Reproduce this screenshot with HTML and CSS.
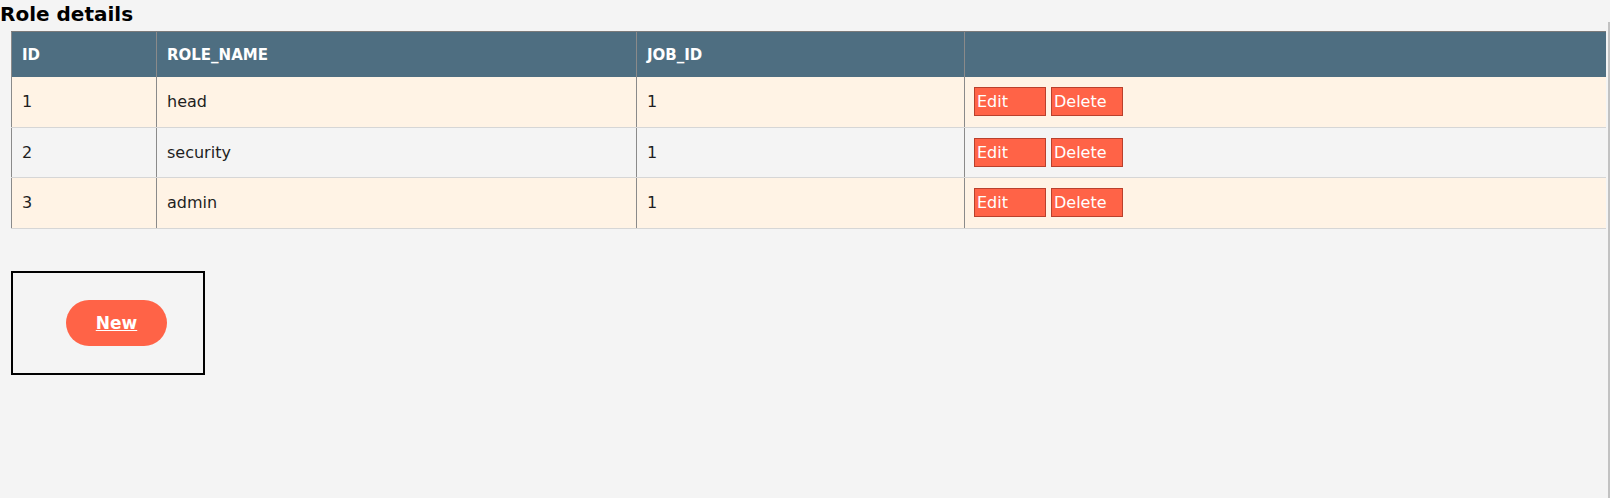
FILE: index.html
```html
<!DOCTYPE html>
<html lang="en">
<head>
<meta charset="utf-8">
<title>Role details</title>
<link rel="stylesheet" href="styles.css">
</head>
<body>
  <h2 class="title">Role details</h2>
  <div class="table-wrap">
    <table class="roles">
      <colgroup>
        <col class="c-id">
        <col class="c-name">
        <col class="c-job">
        <col class="c-act">
      </colgroup>
      <thead>
        <tr><th>ID</th><th>ROLE_NAME</th><th>JOB_ID</th><th></th></tr>
      </thead>
      <tbody>
        <tr class="odd">
          <td>1</td><td>head</td><td>1</td>
          <td><div class="actions"><button class="btn">Edit</button><button class="btn">Delete</button></div></td>
        </tr>
        <tr>
          <td>2</td><td>security</td><td>1</td>
          <td><div class="actions"><button class="btn">Edit</button><button class="btn">Delete</button></div></td>
        </tr>
        <tr class="odd">
          <td>3</td><td>admin</td><td>1</td>
          <td><div class="actions"><button class="btn">Edit</button><button class="btn">Delete</button></div></td>
        </tr>
      </tbody>
    </table>
  </div>
  <div class="new-box">
    <a class="new-btn" href="#">New</a>
  </div>
  <div class="scroll-thumb"></div>
</body>
</html>
```
FILE: styles.css
```css
html, body {
  margin: 0;
  padding: 0;
}
body {
  background: #f4f4f4;
  font-family: "DejaVu Sans", "Noto Sans", sans-serif;
  color: #1e1e1e;
  height: 498px;
  overflow: hidden;
}
.title {
  margin: 0;
  padding-top: 2px;
  font-size: 20px;
  line-height: 24px;
  font-weight: bold;
  color: #000;
}
.table-wrap {
  padding: 5px 4px 0 11px;
}
.roles {
  width: 100%;
  border-collapse: collapse;
  table-layout: fixed;
}
.c-id { width: 145px; }
.c-name { width: 480px; }
.c-job { width: 328px; }
.roles th {
  background: #4e6e81;
  color: #fff;
  font-size: 15px;
  font-weight: bold;
  text-align: left;
  height: 45px;
  padding: 0 10px;
  border-top: 1px solid #7a7a7a;
  border-left: 1px solid #8a8a8a;
}
.roles td {
  font-size: 16px;
  height: 49.6px;
  padding: 0 10px;
  border-left: 1px solid #8a8a8a;
  border-bottom: 1px solid #d6d6d6;
  background: #f4f4f4;
}
.roles tr.odd td {
  background: #fff3e5;
}
.actions {
  display: flex;
  gap: 5px;
  margin-left: -1px;
}
.btn {
  width: 72px;
  height: 29px;
  margin: 0;
  padding: 0 2px;
  background: #ff6347;
  border: 1px solid #b9402c;
  color: #fff;
  font-family: "DejaVu Sans", "Noto Sans", sans-serif;
  font-size: 16px;
  text-align: left;
  line-height: 27px;
}
.new-box {
  display: inline-block;
  margin: 42px 0 0 11px;
  border: 2px solid #000;
  padding: 27px 36px 27px 53px;
}
.new-btn {
  display: block;
  width: 101px;
  height: 46px;
  line-height: 46px;
  border-radius: 23px;
  background: #ff6347;
  color: #fff;
  font-size: 17px;
  font-weight: bold;
  text-align: center;
  text-decoration: underline;
}
.scroll-thumb {
  position: fixed;
  right: 0;
  top: 22px;
  bottom: 0;
  width: 2px;
  background: #c2c2c2;
}
```
